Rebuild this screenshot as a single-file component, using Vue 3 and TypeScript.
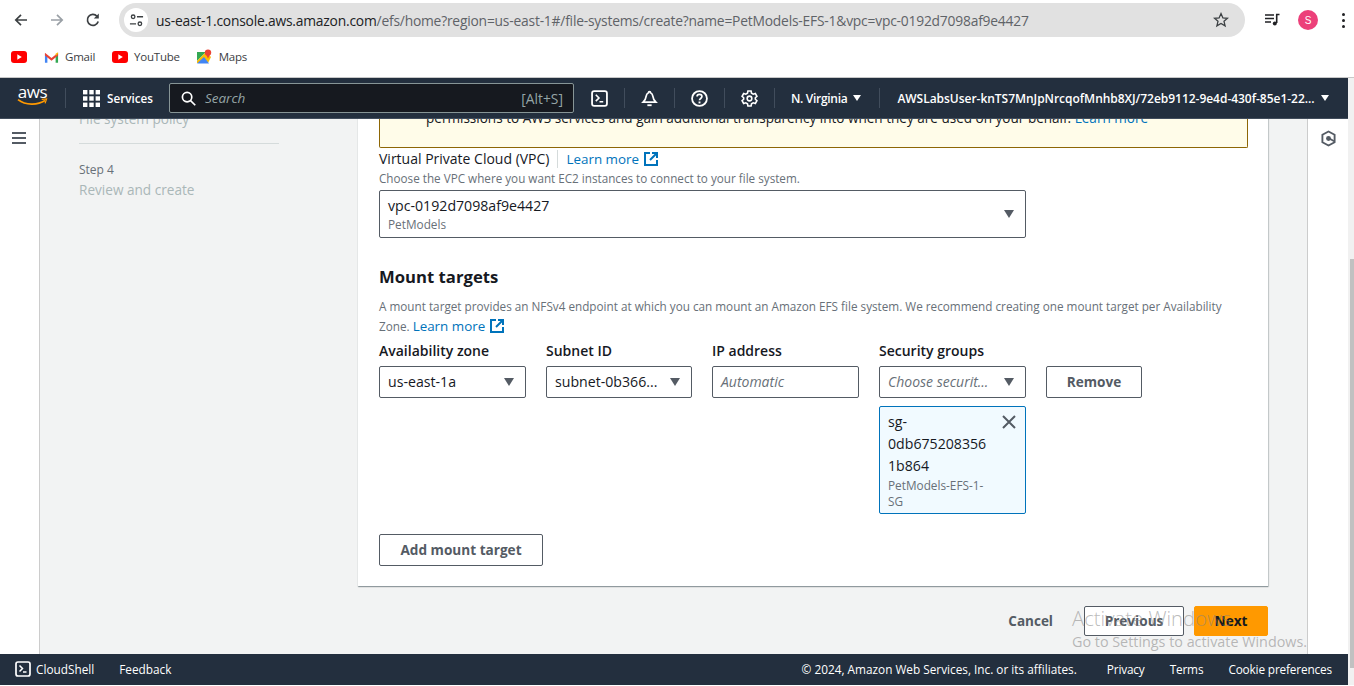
<script setup lang="ts">
const columns: string[] = ['Availability zone', 'Subnet ID', 'IP address', 'Security groups']
</script>

<template>
  <div class="root">
    <header class="toolbar">
      <svg class="tb-ic first" viewBox="0 0 16 16"><path d="M14 8H3M8 2.8 2.8 8 8 13.2" fill="none" stroke="#3c4043" stroke-width="1.7"/></svg>
      <svg class="tb-ic" viewBox="0 0 16 16"><path d="M2 8h11M8 2.8 13.2 8 8 13.2" fill="none" stroke="#9aa0a6" stroke-width="1.7"/></svg>
      <svg class="tb-ic" viewBox="0 0 16 16"><path d="M13.2 9.5A5.5 5.5 0 1 1 12 4.2" fill="none" stroke="#3c4043" stroke-width="1.7"/><path d="M13.8 1.6v5h-5z" fill="#3c4043"/></svg>
      <div class="omnibox">
        <span class="chip">
          <svg viewBox="0 0 16 16" width="15" height="15"><g fill="none" stroke="#3c4043" stroke-width="1.4"><circle cx="4.4" cy="4" r="1.9"/><path d="M8.5 4H15M1 11.5h6.5"/><circle cx="11.6" cy="11.5" r="1.9"/></g></svg>
        </span>
        <span class="url"><span class="host">us-east-1.console.aws.amazon.com</span>/efs/home?region=us-east-1#/file-systems/create?name=PetModels-EFS-1&amp;vpc=vpc-0192d7098af9e4427</span>
        <svg class="star" viewBox="0 0 16 16" width="16" height="16"><path d="m8 1.6 1.9 4.3 4.6.4-3.5 3 1.1 4.6L8 11.5l-4.1 2.4L5 9.3l-3.5-3 4.6-.4z" fill="none" stroke="#3c4043" stroke-width="1.3"/></svg>
      </div>
      <svg class="queue" viewBox="0 0 16 16" width="16" height="16"><path d="M1 3h9M1 6.500h9M1 10h6" stroke="#202124" stroke-width="1.5"/><path d="M12 2.500h3.500M12.700 2.500V11" stroke="#202124" stroke-width="1.6"/><circle cx="10.800" cy="11.500" r="2" fill="#202124"/></svg>
      <span class="avatar">S</span>
      <span class="kebab"><i></i><i></i><i></i></span>
    </header>

    <div class="bookmarks">
      <span class="bm"><svg viewBox="0 0 16 12" width="16" height="12"><rect width="16" height="12" rx="3" fill="#f00"/><path d="m6.300 3.300 4.500 2.700-4.500 2.700z" fill="#fff"/></svg></span>
      <span class="bm"><svg viewBox="0 0 16 12" width="15" height="12"><path d="M1 12h2.600V5L1 2.500z" fill="#4285f4"/><path d="M15 12h-2.600V5L15 2.500z" fill="#34a853"/><path d="M1 1.500 8 7l7-5.500v3L8 10 1 4.500z" fill="#ea4335"/><path d="M12.400 4.800 15 2.500V1l-2.600 1.500z" fill="#fbbc04"/></svg>Gmail</span>
      <span class="bm"><svg viewBox="0 0 16 12" width="16" height="12"><rect width="16" height="12" rx="3" fill="#f00"/><path d="m6.300 3.300 4.500 2.700-4.500 2.700z" fill="#fff"/></svg>YouTube</span>
      <span class="bm"><svg viewBox="0 0 16 16" width="16" height="16"><path d="M1 3h9l-9 9z" fill="#34a853"/><path d="M1 12 10 3l5 5v0l-3 6H1z" fill="#fbbc04"/><path d="M1 14.500 8 8l5 6.500z" fill="#4285f4"/><circle cx="12" cy="3.600" r="3.200" fill="#ea4335"/><path d="m10 5.500 2 4 2-4z" fill="#ea4335"/></svg>Maps</span>
    </div>

    <div class="console">
      <div class="console-col">
        <nav class="topnav">
          <span class="aws">aws<svg viewBox="0 0 32 9" width="31" height="9"><path d="M1 1.500C9 7.500 21 7.500 29 2.500" fill="none" stroke="#f90" stroke-width="1.800"/><path d="m25.500 1.200 5-.4-1.500 4.600" fill="none" stroke="#f90" stroke-width="1.300"/></svg></span>
          <span class="sep s-logo"></span>
          <svg class="grid-ic" viewBox="0 0 17 17" width="17" height="17"><g fill="#fff"><rect width="4.400" height="4.400"/><rect x="6.300" width="4.400" height="4.400"/><rect x="12.600" width="4.400" height="4.400"/><rect y="6.300" width="4.400" height="4.400"/><rect x="6.300" y="6.300" width="4.400" height="4.400"/><rect x="12.600" y="6.300" width="4.400" height="4.400"/><rect y="12.600" width="4.400" height="4.400"/><rect x="6.300" y="12.600" width="4.400" height="4.400"/><rect x="12.600" y="12.600" width="4.400" height="4.400"/></g></svg>
          <span class="services">Services</span>
          <div class="search">
            <svg viewBox="0 0 16 16" width="15" height="15"><circle cx="6.500" cy="6.500" r="5" fill="none" stroke="#fff" stroke-width="1.800"/><path d="m10.200 10.200 5 5" stroke="#fff" stroke-width="1.800"/></svg>
            <span class="search-ph">Search</span>
            <span class="search-key">[Alt+S]</span>
          </div>
          <svg class="nav-ic ic-shell" viewBox="0 0 16 16" width="17" height="17"><rect x="1" y="1" width="14" height="14" rx="2" fill="none" stroke="#fff" stroke-width="1.700"/><path d="m4.500 4.500 3 3-3 3M8 11h3.500" fill="none" stroke="#fff" stroke-width="1.500"/></svg>
          <span class="sep s1"></span>
          <svg class="nav-ic ic-bell" viewBox="0 0 16 16" width="17" height="17"><path d="M8 1.500c-.8 0-1 .5-1 1-1.500.7-2 2-2.200 3.500-.2 2-.8 3.500-2.800 5.500h12c-2-2-2.600-3.500-2.800-5.500C11 4.500 10.500 3.200 9 2.500c0-.5-.2-1-1-1z" fill="none" stroke="#fff" stroke-width="1.600"/><path d="M6 13.500h4v1.700H6z" fill="#fff"/></svg>
          <span class="sep s2"></span>
          <svg class="nav-ic ic-help" viewBox="0 0 16 16" width="17" height="17"><circle cx="8" cy="8" r="7" fill="none" stroke="#fff" stroke-width="1.700"/><path d="M5.700 6.200C5.700 3.500 10.300 3.500 10.300 6.200c0 1.800-2.300 1.700-2.300 3.500" fill="none" stroke="#fff" stroke-width="1.600"/><rect x="7.100" y="10.800" width="1.800" height="1.800" fill="#fff"/></svg>
          <span class="sep s3"></span>
          <svg class="nav-ic ic-gear" viewBox="0 0 16 16" width="17" height="17"><path d="M6.500 1h3l.4 2 1.600.9 2-.6 1.500 2.600-1.500 1.400v1.400l1.500 1.400-1.500 2.600-2-.6-1.600.9-.4 2h-3l-.4-2-1.600-.9-2 .6L1 10.100l1.500-1.400V7.300L1 5.900l1.500-2.600 2 .6 1.600-.9z" fill="none" stroke="#fff" stroke-width="1.500"/><circle cx="8" cy="8" r="2.200" fill="none" stroke="#fff" stroke-width="1.500"/></svg>
          <span class="sep s4"></span>
          <span class="region">N. Virginia</span>
          <span class="caret caret-w"></span>
          <span class="sep s5"></span>
          <span class="account">AWSLabsUser-knTS7MnJpNrcqofMnhb8XJ/72eb9112-9e4d-430f-85e1-22...</span>
          <span class="caret caret-w"></span>
        </nav>

        <div class="workspace">
          <aside class="leftbar">
            <svg viewBox="0 0 14 12" width="14" height="12"><path d="M0 1h14M0 6h14M0 11h14" stroke="#545b64" stroke-width="2"/></svg>
          </aside>

          <main class="page">
            <div class="steps">
              <div class="step-off clipped">File system policy</div>
              <div class="divider"></div>
              <div class="step-no">Step 4</div>
              <div class="step-off">Review and create</div>
            </div>

            <div class="form">
              <section class="card">
                <div class="alert"><span>permissions to AWS services and gain additional transparency into when they are used on your behalf. <a>Learn more</a></span></div>

                <div class="vpc-label">
                  <span class="label-normal">Virtual Private Cloud (VPC)</span>
                  <span class="pipe"></span>
                  <a class="link">Learn more
                    <svg viewBox="0 0 14 14" width="14" height="14"><path d="M6 1H1v12h12V8" fill="none" stroke="#0073bb" stroke-width="2"/><path d="M8 1h5v5M13 1 6 8" fill="none" stroke="#0073bb" stroke-width="2"/></svg>
                  </a>
                </div>
                <div class="desc">Choose the VPC where you want EC2 instances to connect to your file system.</div>
                <div class="select tall">
                  <div>
                    <div class="val">vpc-0192d7098af9e4427</div>
                    <div class="sub">PetModels</div>
                  </div>
                  <span class="caret"></span>
                </div>

                <h2>Mount targets</h2>
                <p class="para">A mount target provides an NFSv4 endpoint at which you can mount an Amazon EFS file system. We recommend creating one mount target per Availability Zone.
                  <a class="link">Learn more
                    <svg viewBox="0 0 14 14" width="14" height="14"><path d="M6 1H1v12h12V8" fill="none" stroke="#0073bb" stroke-width="2"/><path d="M8 1h5v5M13 1 6 8" fill="none" stroke="#0073bb" stroke-width="2"/></svg>
                  </a>
                </p>

                <div class="targets">
                  <div v-for="c in columns" :key="c" class="col-label">{{ c }}</div>
                  <div></div>

                  <div class="select"><span class="val">us-east-1a</span><span class="caret"></span></div>
                  <div class="select"><span class="val ell">subnet-0b366...</span><span class="caret"></span></div>
                  <div class="select"><span class="ph">Automatic</span></div>
                  <div class="select"><span class="ph ell">Choose securit...</span><span class="caret"></span></div>
                  <button class="btn remove">Remove</button>

                  <div class="token">
                    <div class="token-text">
                      <div class="val tline">sg-<br>0db675208356<br>1b864</div>
                      <div class="sub tsub">PetModels-EFS-1-<br>SG</div>
                    </div>
                    <svg class="close" viewBox="0 0 14 14" width="14" height="14"><path d="m1 1 12 12M13 1 1 13" stroke="#545b64" stroke-width="2"/></svg>
                  </div>
                </div>

                <button class="btn add">Add mount target</button>
              </section>

              <div class="actions">
                <span class="cancel">Cancel</span>
                <button class="btn prev">Previous</button>
                <button class="btn next">Next</button>
              </div>
            </div>
          </main>

          <aside class="rightbar">
            <svg viewBox="0 0 16 18" width="15" height="17"><path d="M8 1.500 14.500 5v8L8 16.500 1.500 13V5z" fill="none" stroke="#545b64" stroke-width="2"/><circle cx="8" cy="9" r="2.600" fill="#545b64"/><path d="m9 9 5 3" stroke="#545b64" stroke-width="1.800"/></svg>
          </aside>
        </div>

        <footer class="foot">
          <svg viewBox="0 0 16 16" width="16" height="16"><rect x="1" y="1" width="14" height="14" rx="2" fill="none" stroke="#fff" stroke-width="1.700"/><path d="m4.500 4.500 3 3-3 3M8 11h3.500" fill="none" stroke="#fff" stroke-width="1.500"/></svg>
          <span class="cs">CloudShell</span>
          <span class="fb">Feedback</span>
          <span class="copy">© 2024, Amazon Web Services, Inc. or its affiliates.</span>
          <span class="fl first-link">Privacy</span>
          <span class="fl">Terms</span>
          <span class="fl last">Cookie preferences</span>
        </footer>
      </div>

      <div class="scrollbar"><div class="thumb"></div></div>
    </div>
    <div class="strip"></div>

    <div class="watermark">
      <div class="wm1">Activate Windows</div>
      <div class="wm2">Go to Settings to activate Windows.</div>
    </div>
  </div>
</template>

<style>
html, body { margin: 0; overflow: hidden; background: #fff; }
</style>

<style scoped>
.root {
  position: relative; width: 1354px; height: 686px; display: flex; flex-direction: column;
  overflow: hidden; font-family: "Open Sans", "Noto Sans", sans-serif; color: #16191f; background: #fff;
}
a { color: #0073bb; }

/* Browser toolbar */
.toolbar { height: 40px; flex: none; display: flex; align-items: center; padding-left: 13px; }
.tb-ic { width: 16px; height: 16px; margin-right: 20px; flex: none; }
.omnibox {
  width: 1126px; height: 34px; margin-left: -2px; border-radius: 17px; background: #e1e1e1; display: flex; align-items: center; flex: none;
}
.chip { width: 24px; height: 24px; margin-left: 5px; border-radius: 50%; background: #fff; display: flex; align-items: center; justify-content: center; }
.url { margin-left: 8px; font-size: 13.830px; color: #5f6368; white-space: nowrap; letter-spacing: -0.015em; }
.host { color: #202124; }
.star { margin-left: auto; margin-right: 16px; }
.queue { margin-left: 19px; }
.avatar { width: 20px; height: 20px; margin-left: 18px; border-radius: 50%; background: #ec407a; color: #fff; font-size: 10px; display: flex; align-items: center; justify-content: center; font-family: "Liberation Sans", sans-serif; }
.kebab { margin-left: 24px; display: flex; flex-direction: column; gap: 3px; }
.kebab i { display: block; width: 3px; height: 3px; border-radius: 50%; background: #202124; }

/* Bookmarks */
.bookmarks { height: 38px; flex: none; display: flex; align-items: center; padding: 0 0 4px 11px; border-bottom: 1px solid #c8c8c8; box-sizing: border-box; font-size: 11.500px; color: #3c4043; }
.bm { display: flex; align-items: center; gap: 6.500px; margin-right: 16.500px; letter-spacing: -0.02em; }

/* Console */
.console { flex: 1; min-height: 0; display: flex; }
.console-col { flex: 1; min-width: 0; display: flex; flex-direction: column; }
.scrollbar { width: 6px; flex: none; background: #f1f1f1; display: flex; flex-direction: column; justify-content: flex-end; }
.thumb { height: 409px; margin-bottom: 17px; margin-left: 2px; background: #c1c1c1; }
.strip { height: 1px; flex: none; background: #fff; }

.topnav { height: 40px; flex: none; background: #232f3e; border-bottom: 1px solid #414d5c; display: flex; align-items: center; color: #fff; font-size: 12px; font-weight: 600; }
.aws { margin-left: 17px; width: 31px; height: 30px; font: 400 17px/17px "Open Sans", sans-serif; display: flex; flex-direction: column; align-items: center; letter-spacing: -0.02em; }
.aws svg { margin-top: -2px; flex: none; }
.sep { width: 1px; height: 20px; background: #414d5c; flex: none; }
.s-logo { margin-left: 17px; }
.grid-ic { margin-left: 17px; }
.services { margin-left: 7px; font-size: 11.700px; }
.search { width: 405px; height: 30px; margin-left: 16px; box-sizing: border-box; background: #16191f; border: 1px solid #879596; border-radius: 2px; display: flex; align-items: center; padding: 0 10px 0 11px; flex: none; }
.search-ph { margin-left: 9px; font-style: italic; font-size: 13.500px; font-weight: 400; color: #95a5a6; }
.search-key { margin-left: auto; font-size: 13.800px; font-weight: 400; color: #95a5a6; }
.ic-shell { margin-left: 17px; }
.s1 { margin-left: 16px; }
.ic-bell { margin-left: 16px; }
.s2 { margin-left: 16px; }
.ic-help { margin-left: 16px; }
.s3 { margin-left: 16px; }
.ic-gear { margin-left: 16px; }
.s4 { margin-left: 16px; }
.region { margin-left: 16px; letter-spacing: -0.3px; }
.s5 { margin-left: 18px; }
.account { margin-left: 17px; white-space: nowrap; letter-spacing: -0.03px; }

.caret { width: 0; height: 0; border-left: 5px solid transparent; border-right: 5px solid transparent; border-top: 8px solid #545b64; flex: none; margin-left: auto; }
.caret-w { border-top-color: #fff; margin-left: 6px; border-left-width: 4.500px; border-right-width: 4.500px; border-top-width: 6px; }

.workspace { flex: 1; min-height: 0; display: flex; }
.leftbar { flex: none; background: #fff; border-right: 1px solid #ccc; padding: 13px 0 0 12px; box-sizing: border-box; width: 40px; }
.leftbar svg { display: block; }
.rightbar { width: 41px; flex: none; background: #fff; border-left: 1px solid #ccc; box-sizing: border-box; display: flex; justify-content: center; padding-top: 11px; }
.rightbar svg { display: block; }
.page { flex: 1; min-width: 0; background: #f2f3f3; display: flex; overflow: hidden; }

.steps { width: 318px; flex: none; padding: 0 0 0 39px; box-sizing: border-box; }
.step-off { color: #aab7b8; font-size: 13.600px; line-height: 20px; }
.clipped { margin-top: -10px; }
.divider { width: 200px; height: 1px; background: #d5dbdb; margin: 14px 0 18px; }
.step-no { font-size: 12px; line-height: 16px; color: #687078; margin-bottom: 2px; }

.form { flex: 1; min-width: 0; height: 535px; display: flex; flex-direction: column; justify-content: flex-end; padding: 0 39px 18px 0; box-sizing: border-box; }
.card { flex: none; background: #fff; padding: 0 20px 20px 21px; box-shadow: 0 1px 1px 0 rgba(0,28,36,.3), 1px 1px 1px 0 rgba(0,28,36,.15); }
.alert { background: #fffce9; border: 1px solid #8d6605; border-top: 0; border-radius: 0 0 2px 2px; padding: 8px 0 20px 46px; font-size: 13.550px; line-height: 18px; color: #16191f; white-space: nowrap; }
.vpc-label { display: flex; align-items: center; height: 20px; margin-top: 1px; font-size: 14px; }
.label-normal { line-height: 20px; }
.pipe { width: 1px; height: 18px; background: #d5dbdb; margin: 0 8px; }
.link { color: #0073bb; display: inline-flex; align-items: center; gap: 5px; font-size: 13.400px; }
.desc { font-size: 11.700px; line-height: 16px; color: #687078; margin-top: 1px; }
.select { box-sizing: border-box; height: 32px; border: 1px solid #545b64; border-radius: 2px; background: #fff; display: flex; align-items: center; padding: 0 11px 0 8px; min-width: 0; }
.select.tall { width: 647px; height: 48px; margin-top: 4px; }
.val { font-size: 14.150px; line-height: 20px; color: #16191f; }
.sub { font-size: 11.800px; line-height: 16px; color: #687078; }
.ph { font-size: 14px; line-height: 20px; padding-bottom: 1px; font-style: italic; color: #687078; }
.ell { white-space: nowrap; }

h2 { margin: 27px 0 0; font-size: 16.700px; line-height: 24px; font-weight: 700; }
.para { margin: 7px 0 0; font-size: 11.730px; line-height: 20px; color: #687078; width: 860px; }
.targets { display: grid; grid-template-columns: 147px 146px 147px 147px 96px; column-gap: 20px; margin-top: 5px; align-items: start; }
.col-label { font-size: 14px; line-height: 20px; font-weight: 600; margin-bottom: 5px; }

.btn { box-sizing: border-box; height: 32px; background: #fff; border: 1px solid #545b64; border-radius: 2px; font: 700 13.600px "Open Sans", sans-serif; color: #545b64; padding: 0 0 2px; }
.token { grid-column: 4; margin-top: 8px; height: 108px; box-sizing: border-box; background: #f1faff; border: 1px solid #0073bb; border-radius: 2px; padding: 4px 9px 0 8px; display: flex; justify-content: space-between; }
.tline { line-height: 22px; }
.tsub { line-height: 16px; margin-top: 0; }
.close { margin-top: 4px; }
.remove { grid-column: 5; grid-row: 2; }
.add { display: block; width: 164px; margin-top: 20px; }

.actions { display: flex; align-items: center; margin-top: 20px; flex: none; }
.cancel { margin-left: auto; font-size: 13.500px; font-weight: 700; color: #545b64; margin-right: 31px; }
.prev { width: 100px; height: 30px; color: #545b64; margin-right: 10px; }
.next { width: 74px; height: 30px; background: #f90; border-color: #f90; color: #16191f; }

.foot { height: 31px; flex: none; box-sizing: border-box; background: #232f3e; color: #fff; display: flex; align-items: center; font-size: 11.800px; font-weight: 500; padding: 0 0 2px 15px; }
.cs { margin-left: 5px; }
.fb { margin-left: 25px; }
.copy { margin-left: auto; }
.fl { margin-left: 25px; letter-spacing: -0.15px; }
.first-link { margin-left: 30px; }
.fl.last { margin-right: 16px; }

.watermark { position: absolute; left: 1072px; top: 605px; color: rgba(130,130,130,.55); pointer-events: none; white-space: nowrap; }
.wm1 { font-size: 20.300px; line-height: 27px; font-weight: 300; }
.wm2 { font-size: 14.350px; line-height: 20px; }
</style>
